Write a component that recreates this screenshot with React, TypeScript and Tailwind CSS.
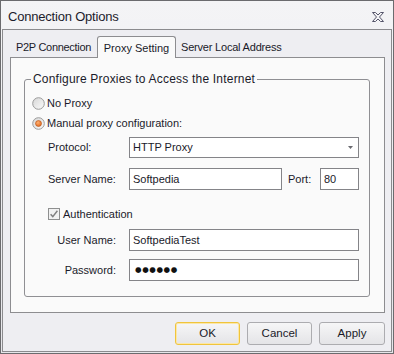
import React from "react";

const font = { fontFamily: '"Liberation Sans", Arial, sans-serif' };

function Radio({ checked }: { checked?: boolean }) {
  return (
    <svg width="13" height="13" viewBox="0 0 13 13" className="shrink-0">
      <defs>
        <linearGradient id={checked ? "rg1" : "rg0"} x1="0" y1="0" x2="1" y2="1">
          <stop offset="0" stopColor="#d6d6d6" />
          <stop offset="1" stopColor="#fbfbfb" />
        </linearGradient>
        <radialGradient id="og" cx="0.4" cy="0.35" r="0.7">
          <stop offset="0" stopColor="#ffb070" />
          <stop offset="1" stopColor="#e0661a" />
        </radialGradient>
      </defs>
      <circle cx="6.5" cy="6.5" r="5.8" fill={`url(#${checked ? "rg1" : "rg0"})`} stroke="#9a9a9a" strokeWidth="1" />
      {checked && <circle cx="6.5" cy="6.5" r="3" fill="url(#og)" stroke="#b5541a" strokeWidth="0.6" />}
    </svg>
  );
}

function Checkbox() {
  return (
    <svg width="12" height="12" viewBox="0 0 12 12" className="shrink-0">
      <rect x="0.5" y="0.5" width="11" height="11" fill="#f1f1f1" stroke="#8e8f8f" />
      <path d="M2.6 6.2 L4.8 8.6 L9.4 2.8" fill="none" stroke="#808080" strokeWidth="1.5" />
    </svg>
  );
}

function Btn({ label, def, w }: { label: string; def?: boolean; w: string }) {
  return (
    <div
      className={`${w} h-[23px] rounded-[3px] border flex items-center justify-center text-[11.5px] text-[#1a1a28] bg-[linear-gradient(#f6f6f7,#e4e4e7)] ${
        def ? "border-[#f0c43c] shadow-[inset_0_0_0_1px_#fbe7a8]" : "border-[#acacb0]"
      }`}
    >
      {label}
    </div>
  );
}

export default function App() {
  return (
    <div
      style={font}
      className="w-[394px] h-[354px] border border-[#6b6b6e] bg-[linear-gradient(#f4f4f6,#e6e6ea)] flex flex-col text-[#1a1a2a]"
    >
      {/* Title bar */}
      <div className="h-[28px] flex items-center justify-between pl-[7px] pr-[9px] pt-[3px]">
        <span className="text-[13px] tracking-[-0.2px] text-[#1c1c2c]">Connection Options</span>
        <svg width="12" height="10" viewBox="0 0 12 10">
          <path
            d="M0.5 0.5 H3.5 L6 3 L8.5 0.5 H11.5 L7.5 5 L11.5 9.5 H8.5 L6 7 L3.5 9.5 H0.5 L4.5 5 Z"
            fill="#f4f4f6"
            stroke="#55556a"
            strokeWidth="1"
            strokeLinejoin="round"
          />
        </svg>
      </div>

      {/* Client */}
      <div className="flex-1 mx-px mb-px border border-[#8b8b8e] bg-[#eeeef2] flex flex-col">
        {/* Tabs */}
        <div className="mt-[6px] ml-[7px] h-[21px] flex items-start text-[11px]">
          <div className="w-[87px] h-[21px] flex items-center pl-[6px] pt-[2px] tracking-[-0.3px] text-[#1a1a2a]">P2P Connection</div>
          <div className="relative z-10 w-[79px] h-[22px] border border-b-0 border-[#8d8d90] rounded-t-[3px] bg-[#fafafa] flex items-center justify-center pt-[1px]">
            Proxy Setting
          </div>
          <div className="h-[21px] flex items-center pl-[5px] pt-[2px] tracking-[-0.2px]">Server Local Address</div>
        </div>

        {/* Panel */}
        <div className="ml-[7px] mr-[6px] h-[256px] border border-[#8d8d90] bg-[#fafafa] pt-[14px] pl-[13px] pr-[14px]">
          <fieldset className="h-[225px] border border-[#8f8f93] rounded-[3px] text-[11px]">
            <legend className="ml-[6px] px-[2px] h-[14px] leading-[14px] text-[12px] tracking-[0.2px]">
              Configure Proxies to Access the Internet
            </legend>
            <div className="flex flex-col pt-[7px]">
              <div className="h-[20px] flex items-center pl-[7px] gap-[2px]">
                <Radio />
                <span>No Proxy</span>
              </div>
              <div className="h-[20px] flex items-center pl-[7px] gap-[2px]">
                <Radio checked />
                <span>Manual proxy configuration:</span>
              </div>
              <div className="mt-[4px] h-[21px] flex items-center pl-[23px]">
                <span className="w-[81px]">Protocol:</span>
                <div className="w-[230px] h-[21px] border border-[#848488] bg-white flex items-center justify-between pl-[3px] pr-[5px]">
                  <span>HTTP Proxy</span>
                  <svg width="5" height="3" viewBox="0 0 5 3">
                    <path d="M0 0 H5 L2.5 3 Z" fill="#6a6a70" />
                  </svg>
                </div>
              </div>
              <div className="mt-[10px] h-[22px] flex items-center pl-[23px]">
                <span className="w-[81px]">Server Name:</span>
                <div className="w-[153px] h-[22px] border border-[#848488] bg-white flex items-center pl-[3px]">Softpedia</div>
                <span className="ml-[6px] w-[32px]">Port:</span>
                <div className="w-[39px] h-[22px] border border-[#848488] bg-white flex items-center pl-[3px]">80</div>
              </div>
              <div className="mt-[14px] h-[20px] flex items-center pl-[23px] gap-[3px]">
                <Checkbox />
                <span>Authentication</span>
              </div>
              <div className="mt-[5px] h-[22px] flex items-center pl-[23px]">
                <span className="w-[81px] pr-[13px] text-right">User Name:</span>
                <div className="w-[230px] h-[22px] border border-[#848488] bg-white flex items-center pl-[3px]">SoftpediaTest</div>
              </div>
              <div className="mt-[8px] h-[22px] flex items-center pl-[23px]">
                <span className="w-[81px] pr-[13px] text-right">Password:</span>
                <div
                  className="w-[230px] h-[22px] border border-[#848488] bg-white flex items-center pl-[5px] text-[7.5px] tracking-[0.6px] text-[#111]"
                  style={{ fontFamily: '"DejaVu Sans", sans-serif' }}
                >
                  ●●●●●●
                </div>
              </div>
            </div>
          </fieldset>
        </div>

        {/* Buttons */}
        <div className="mt-[9px] flex justify-end pr-[6px] gap-[7px]">
          <Btn label="OK" def w="w-[65px]" />
          <Btn label="Cancel" w="w-[65px]" />
          <Btn label="Apply" w="w-[66px]" />
        </div>
      </div>
    </div>
  );
}
